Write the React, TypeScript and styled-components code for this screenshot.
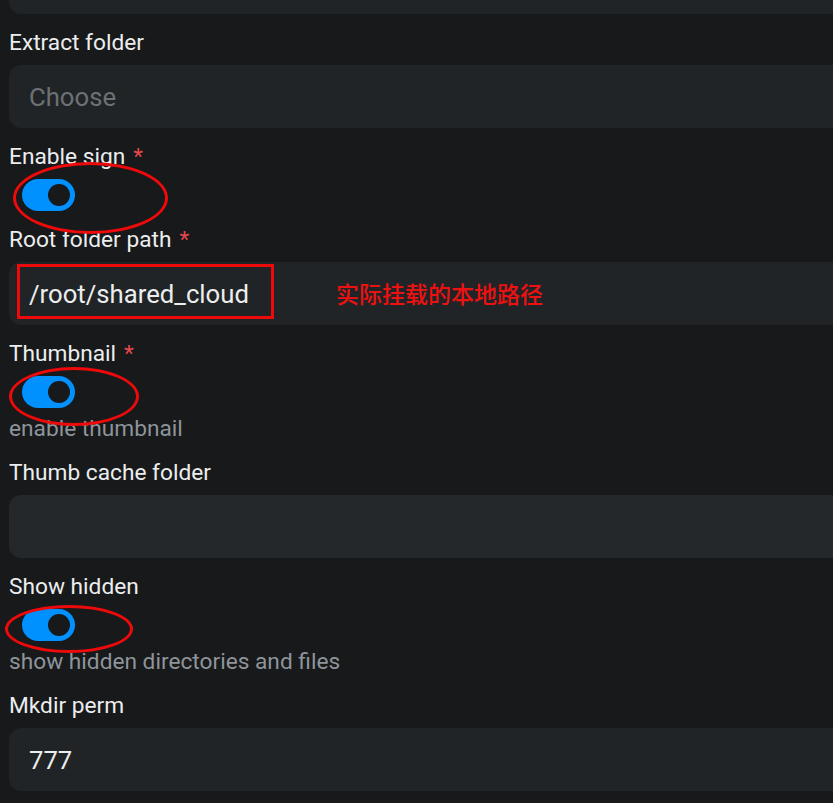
import React from "react";
import styled, { createGlobalStyle } from "styled-components";

const GlobalStyle = createGlobalStyle`
  html, body {
    margin: 0;
    padding: 0;
    background: #17191b;
    overflow: hidden;
  }
  body {
    font-family: Roboto, "Noto Sans", "Liberation Sans", sans-serif;
    color: #ecedee;
  }
`;

const Page = styled.div`
  position: relative;
  width: 833px;
  height: 803px;
  overflow: hidden;
`;

const Form = styled.div`
  display: flex;
  flex-direction: column;
  padding-left: 9px;
  width: 860px;
  margin-top: -49px;
`;

const Field = styled.div`
  display: flex;
  flex-direction: column;
  margin-bottom: 13px;
`;

const Label = styled.label`
  display: block;
  font-size: 22.7px;
  line-height: 30px;
  padding-top: 1px;
  margin-bottom: 7px;
  color: #ecedee;
`;

const Required = styled.span`
  color: #e5484d;
  margin-left: 8px;
`;

const Input = styled.div<{ $hover?: boolean; $placeholder?: boolean }>`
  box-sizing: border-box;
  height: 63px;
  width: 100%;
  border-radius: 12px;
  background: ${(p) => (p.$hover ? "#25282b" : "#212426")};
  padding-left: 20px;
  display: flex;
  align-items: center;
  font-size: 25.7px;
  color: ${(p) => (p.$placeholder ? "#6c7176" : "#ecedee")};
`;

const Switch = styled.div`
  box-sizing: border-box;
  width: 53px;
  height: 32px;
  margin-left: 13px;
  border-radius: 16px;
  background: #0091ff;
  padding: 5px;
  display: flex;
  justify-content: flex-end;
`;

const Thumb = styled.div`
  width: 22px;
  height: 22px;
  border-radius: 50%;
  background: #17191b;
`;

const Helper = styled.div`
  font-size: 22.7px;
  line-height: 30px;
  margin-top: 6px;
  color: #8e949a;
`;

const Ellipse = styled.div`
  position: absolute;
  box-sizing: border-box;
  border: 3px solid #ee0a0a;
  border-radius: 50%;
`;

const Box = styled.div`
  position: absolute;
  box-sizing: border-box;
  border: 3px solid #ee0a0a;
`;

const Note = styled.div`
  position: absolute;
  font-family: "Noto Sans CJK SC", sans-serif;
  font-size: 23px;
  line-height: 1;
  font-weight: 500;
  color: #ee1111;
`;

const Toggle = () => (
  <Switch>
    <Thumb />
  </Switch>
);

export default function App() {
  return (
    <Page>
      <GlobalStyle />
      <Form>
        <Field>
          <Input />
        </Field>
        <Field>
          <Label>Extract folder</Label>
          <Input $placeholder>Choose</Input>
        </Field>
        <Field>
          <Label>
            Enable sign<Required>*</Required>
          </Label>
          <Toggle />
        </Field>
        <Field>
          <Label>
            Root folder path<Required>*</Required>
          </Label>
          <Input>/root/shared_cloud</Input>
        </Field>
        <Field>
          <Label>
            Thumbnail<Required>*</Required>
          </Label>
          <Toggle />
          <Helper>enable thumbnail</Helper>
        </Field>
        <Field>
          <Label>Thumb cache folder</Label>
          <Input $hover />
        </Field>
        <Field>
          <Label>Show hidden</Label>
          <Toggle />
          <Helper>show hidden directories and files</Helper>
        </Field>
        <Field>
          <Label>Mkdir perm</Label>
          <Input>777</Input>
        </Field>
      </Form>
      <Ellipse style={{ left: 13, top: 162, width: 155, height: 72 }} />
      <Ellipse style={{ left: 9, top: 367, width: 130, height: 59 }} />
      <Ellipse style={{ left: 5, top: 605, width: 128, height: 48 }} />
      <Box style={{ left: 17, top: 264, width: 257, height: 55 }} />
      <Note style={{ left: 336, top: 282 }}>实际挂载的本地路径</Note>
    </Page>
  );
}
